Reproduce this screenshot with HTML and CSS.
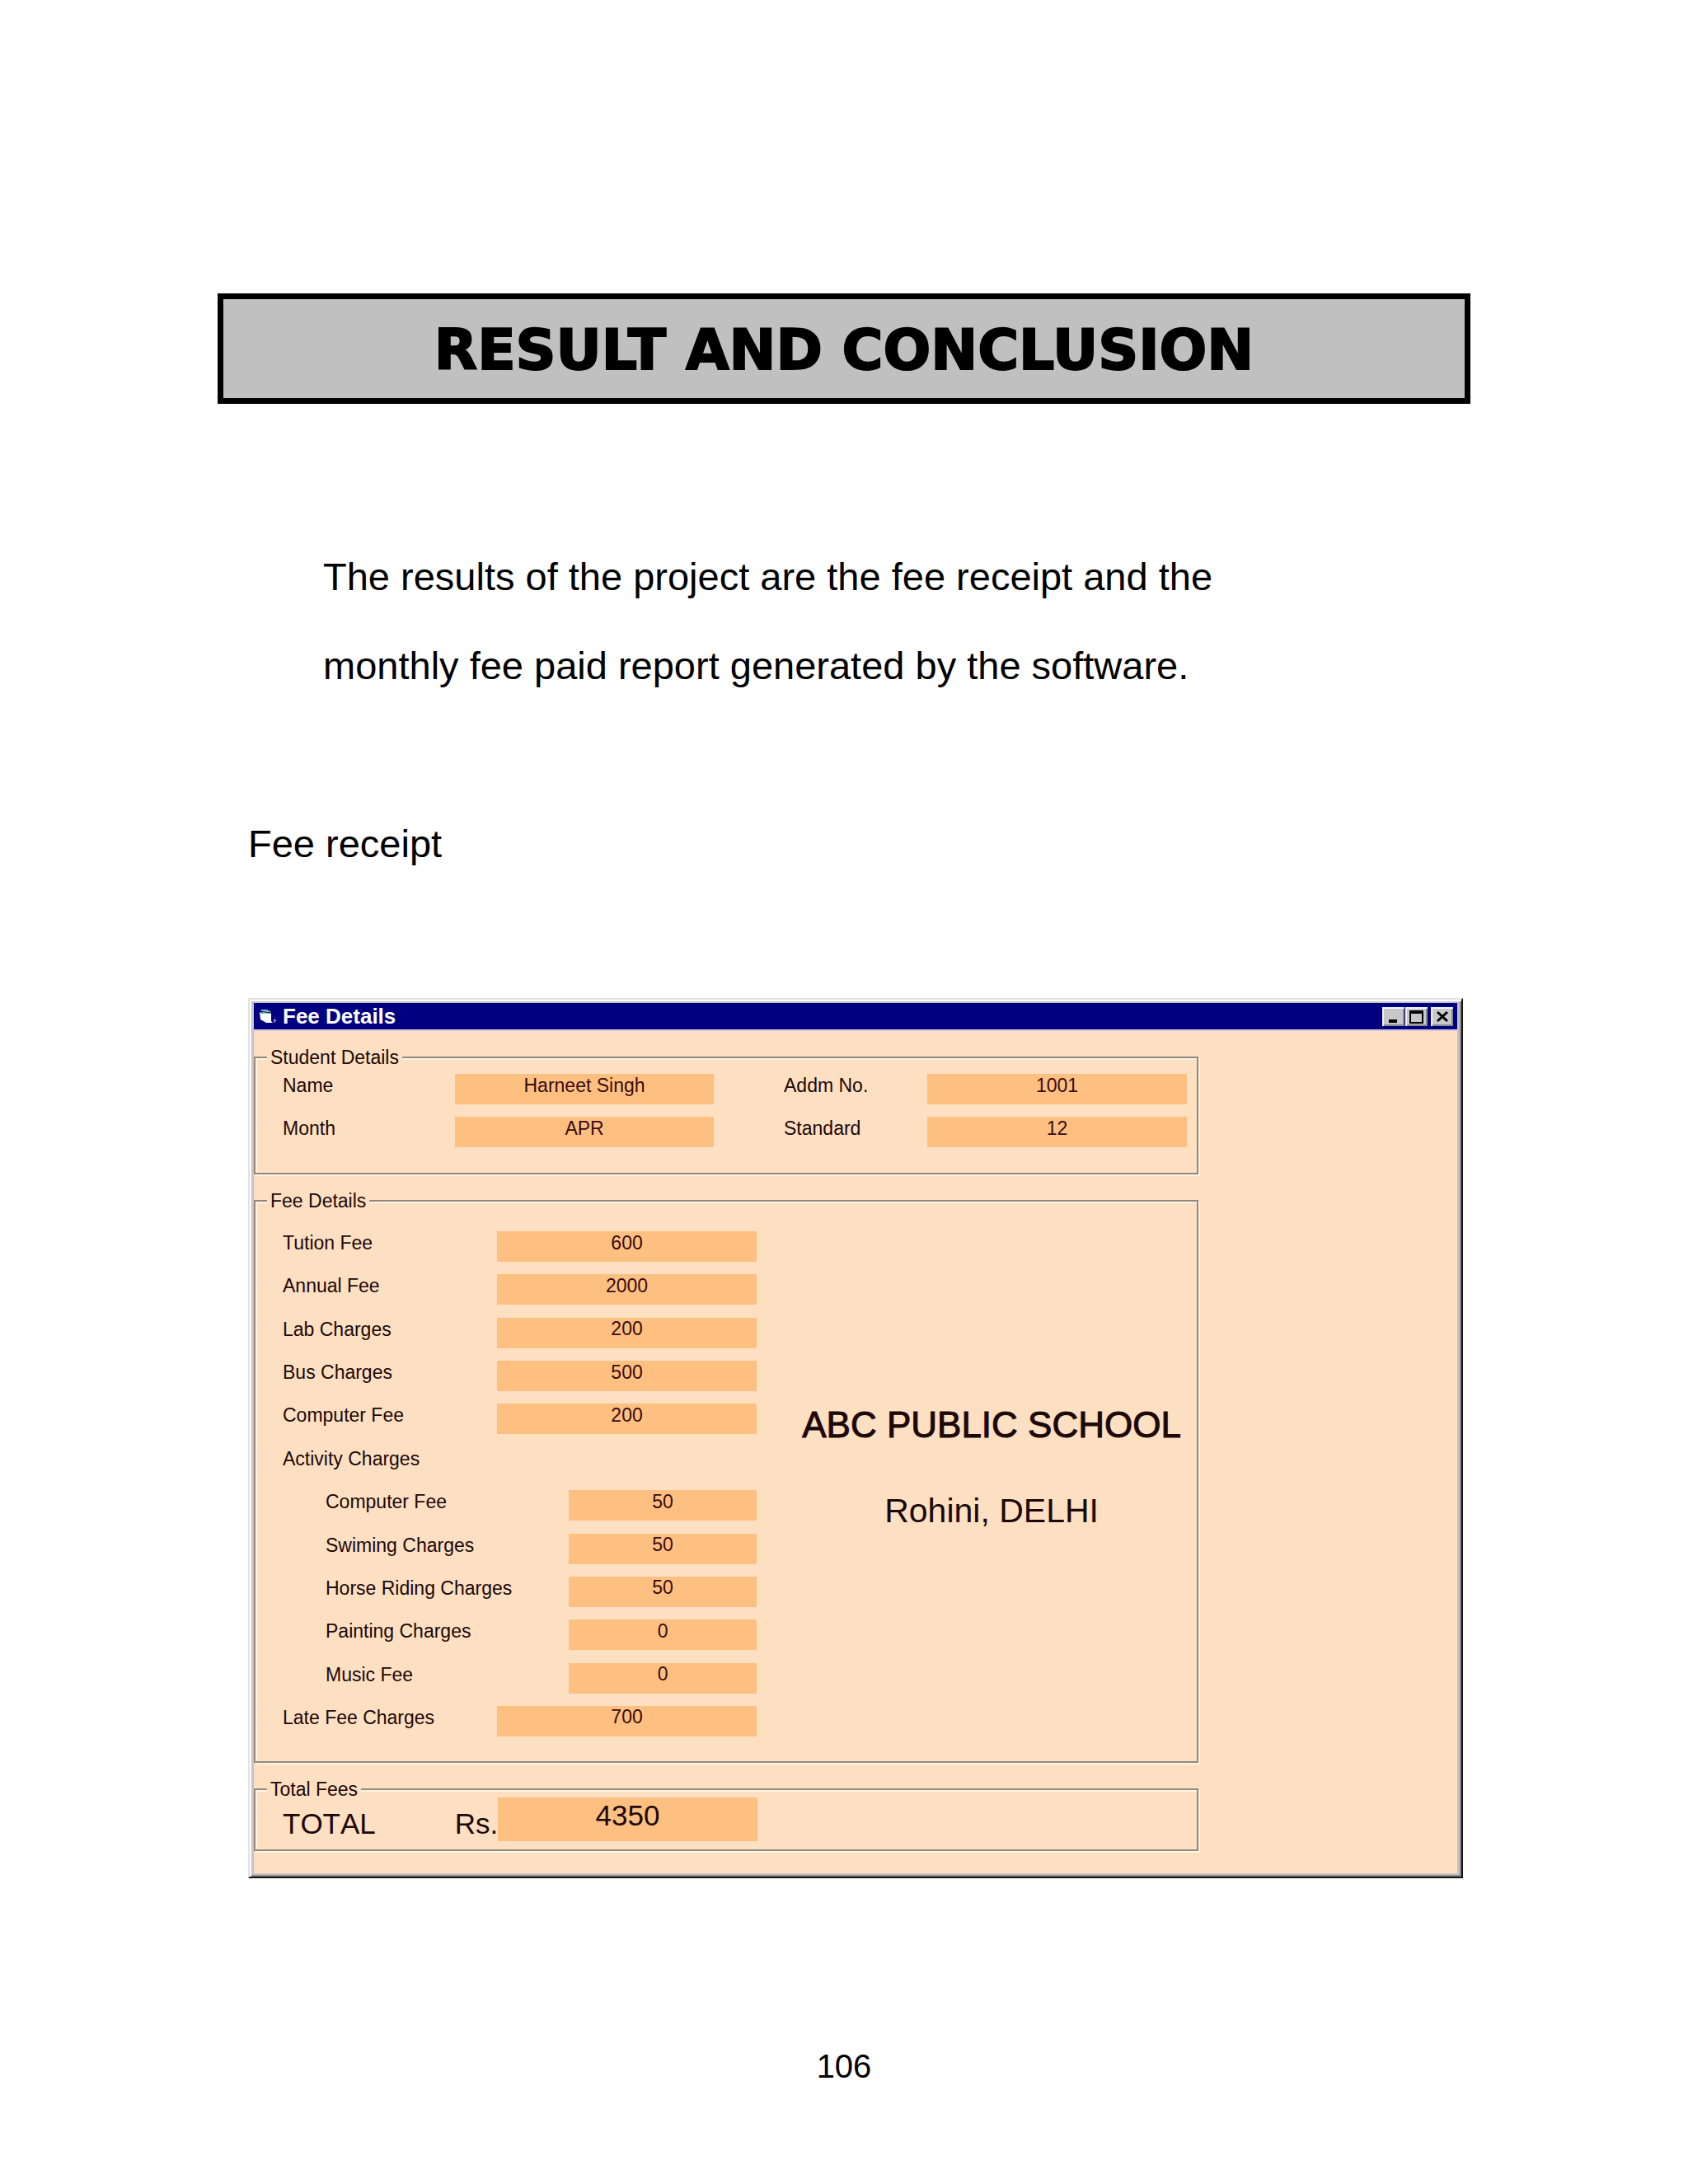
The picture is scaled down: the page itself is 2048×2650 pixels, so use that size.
FILE: index.html
```
<!DOCTYPE html>
<html lang="en">
<head>
    <meta charset="UTF-8">
    <title>Result and Conclusion</title>
    <link rel="stylesheet" href="styles.css">
</head>
<body>
    <div class="page">
        <h1 class="page-title">RESULT AND CONCLUSION</h1>
        <p class="intro">The results of the project are the fee receipt and the<br>monthly fee paid report generated by the software.</p>
        <h2 class="section-title">Fee receipt</h2>

        <div class="window">
            <div class="title-bar">
                <svg class="form-icon" viewBox="0 0 24 18">
                    <path d="M1 1h8l5 3v2H4z" fill="#7fc4c8"/>
                    <path d="M2 3l5 1 7 1" fill="none" stroke="#0a1440" stroke-width="1"/>
                    <path d="M0 4l4 2h10v9l2 2H8l-7-4z" fill="#fff"/>
                    <path d="M17 12l4 2-2 1v2l-2-1z" fill="#8a93b8"/>
                </svg>
                <span class="title-text">Fee Details</span>
                <div class="window-buttons">
                    <button type="button" aria-label="Minimize"><svg viewBox="0 0 27 23"><path d="M8 17h10" stroke="#000" stroke-width="4"/></svg></button>
                    <button type="button" aria-label="Maximize"><svg viewBox="0 0 27 23"><path d="M6 5h15v14H6z" fill="none" stroke="#000" stroke-width="2"/><path d="M5 6h17" stroke="#000" stroke-width="4"/></svg></button>
                    <button type="button" class="close" aria-label="Close"><svg viewBox="0 0 27 23"><path d="M8 6l12 11M20 6L8 17" stroke="#000" stroke-width="3"/></svg></button>
                </div>
            </div>
            <form class="form">
                <fieldset>
                    <legend>Student Details</legend>
                    <div class="student-grid">
                        <label for="name">Name</label>
                        <input id="name" value="Harneet Singh" readonly>
                        <label for="addm" class="second">Addm No.</label>
                        <input id="addm" value="1001" readonly>
                        <label for="month">Month</label>
                        <input id="month" value="APR" readonly>
                        <label for="standard" class="second">Standard</label>
                        <input id="standard" value="12" readonly>
                    </div>
                </fieldset>

                <fieldset class="fee-details">
                    <legend>Fee Details</legend>
                    <div class="fee-layout">
                        <div class="fee-rows">
                            <div class="row"><label for="tution">Tution Fee</label><input id="tution" value="600" readonly></div>
                            <div class="row"><label for="annual">Annual Fee</label><input id="annual" value="2000" readonly></div>
                            <div class="row"><label for="lab">Lab Charges</label><input id="lab" value="200" readonly></div>
                            <div class="row"><label for="bus">Bus Charges</label><input id="bus" value="500" readonly></div>
                            <div class="row"><label for="computer">Computer Fee</label><input id="computer" value="200" readonly></div>
                            <div class="row"><span>Activity Charges</span></div>
                            <div class="row sub"><label for="act-computer">Computer Fee</label><input id="act-computer" value="50" readonly></div>
                            <div class="row sub"><label for="swiming">Swiming Charges</label><input id="swiming" value="50" readonly></div>
                            <div class="row sub"><label for="horse">Horse Riding Charges</label><input id="horse" value="50" readonly></div>
                            <div class="row sub"><label for="painting">Painting Charges</label><input id="painting" value="0" readonly></div>
                            <div class="row sub"><label for="music">Music Fee</label><input id="music" value="0" readonly></div>
                            <div class="row"><label for="late">Late Fee Charges</label><input id="late" value="700" readonly></div>
                        </div>
                        <div class="school">
                            <div class="school-name">ABC PUBLIC SCHOOL</div>
                            <div class="school-place">Rohini, DELHI</div>
                        </div>
                    </div>
                </fieldset>

                <fieldset class="total-fees">
                    <legend>Total Fees</legend>
                    <div class="total-row">
                        <label for="total">TOTAL</label>
                        <span>Rs.</span>
                        <input id="total" value="4350" readonly>
                    </div>
                </fieldset>
            </form>
        </div>

        <footer class="page-number">106</footer>
    </div>
</body>
</html>
```
FILE: styles.css
```
* {
    box-sizing: border-box;
}
body {
    margin: 0;
    background: #fff;
    color: #000;
    font-family: 'Liberation Sans', Arial, sans-serif;
}
.page {
    padding: 356px 264px 96px;
}
.page-title {
    margin: 0;
    padding: 22px 0 18px;
    border: 7px solid #000;
    background: #c0c0c0;
    font-family: 'Arial Black', 'DejaVu Sans', sans-serif;
    font-size: 68px;
    font-weight: bold;
    line-height: 80px;
    text-align: center;
    -webkit-text-stroke: 2px #000;
}
.intro {
    margin: 156px 0 108px 128px;
    font-size: 47px;
    line-height: 108px;
}
.section-title {
    margin: 0 0 133px 37px;
    font-size: 47px;
    font-weight: normal;
    line-height: 108px;
}

/* window frame */
.window {
    margin: 0 9px 0 37px;
    padding: 4px 5px;
    background: #c6c2c6;
    border: 2px solid;
    border-color: #e2e2e2 #111 #111 #e2e2e2;
    box-shadow: inset 2px 2px 0 #fff, inset -2px -2px 0 #8f8a8a;
}
.title-bar {
    display: flex;
    align-items: center;
    height: 34px;
    padding: 0 5px 0 7px;
    background: #000080;
    border-bottom: 2px solid #d8c8dc;
}
.form-icon {
    width: 24px;
    height: 18px;
    margin-right: 4px;
}
.title-text {
    color: #fff;
    font-size: 26px;
    font-weight: bold;
}
.window-buttons {
    display: flex;
    gap: 1px;
    margin-left: auto;
}
.window-buttons button {
    width: 27px;
    height: 23px;
    padding: 0;
    border: 0;
    background: #c8c8c8;
    box-shadow: inset 2px 2px 0 #f4f4f4, inset -2px -2px 0 #8a8a8a;
}
.window-buttons svg {
    display: block;
    width: 27px;
    height: 23px;
}
.window-buttons .close {
    margin-left: 3px;
}

/* form */
.form {
    padding: 22px 0 27px;
    background: #fddfc2;
    color: #1c0808;
    font-size: 23px;
}
fieldset {
    width: 78.5%;
    margin: 0 0 22px;
    padding: 10px 12px 31px 33px;
    border: 2px solid #94897c;
    box-shadow: inset 2px 2px 0 #fff4e4, 2px 2px 0 #fff4e4;
}
legend {
    margin-left: -19px;
    padding: 0 4px;
    background: #fddfc2;
    line-height: 20px;
}
label,
.row span,
.total-row span {
    line-height: 28px;
}
input {
    width: 100%;
    min-width: 0;
    height: 37px;
    padding: 0 0 9px;
    border: 0;
    background: #fdc080;
    color: #3a0a10;
    font: inherit;
    text-align: center;
}
.student-grid {
    display: grid;
    grid-template-columns: 209fr 314fr 259fr 315fr;
    row-gap: 15px;
}
.second {
    padding-left: 85px;
}
.fee-details {
    padding-top: 27px;
    padding-bottom: 30px;
}
.fee-layout {
    display: grid;
    grid-template-columns: 575fr 522fr;
}
.fee-rows {
    display: flex;
    flex-direction: column;
    justify-content: space-between;
    min-height: 613px;
}
.row {
    display: grid;
    grid-template-columns: 260fr 315fr;
    min-height: 37px;
}
.sub {
    grid-template-columns: 347fr 228fr;
}
.sub label {
    padding-left: 52px;
}
.school {
    display: flex;
    flex-direction: column;
    align-items: center;
    gap: 56px;
    padding: 211px 0 0 48px;
    white-space: nowrap;
}
.school-name {
    font-size: 44px;
    line-height: 48px;
    -webkit-text-stroke: 1px #1c0808;
}
.school-place {
    font-size: 41px;
    line-height: 48px;
}
.total-fees {
    margin-bottom: 0;
    padding-top: 0;
    padding-bottom: 7px;
}
.total-row {
    display: grid;
    grid-template-columns: 209fr 51fr 315fr 522fr;
    font-size: 35px;
    font-kerning: none;
}
.total-row label,
.total-row span {
    padding-top: 8px;
    line-height: 48px;
}
.total-row input {
    height: 53px;
    color: #1c0808;
}

.page-number {
    margin-top: 204px;
    font-size: 40px;
    line-height: 48px;
    text-align: center;
}
```
